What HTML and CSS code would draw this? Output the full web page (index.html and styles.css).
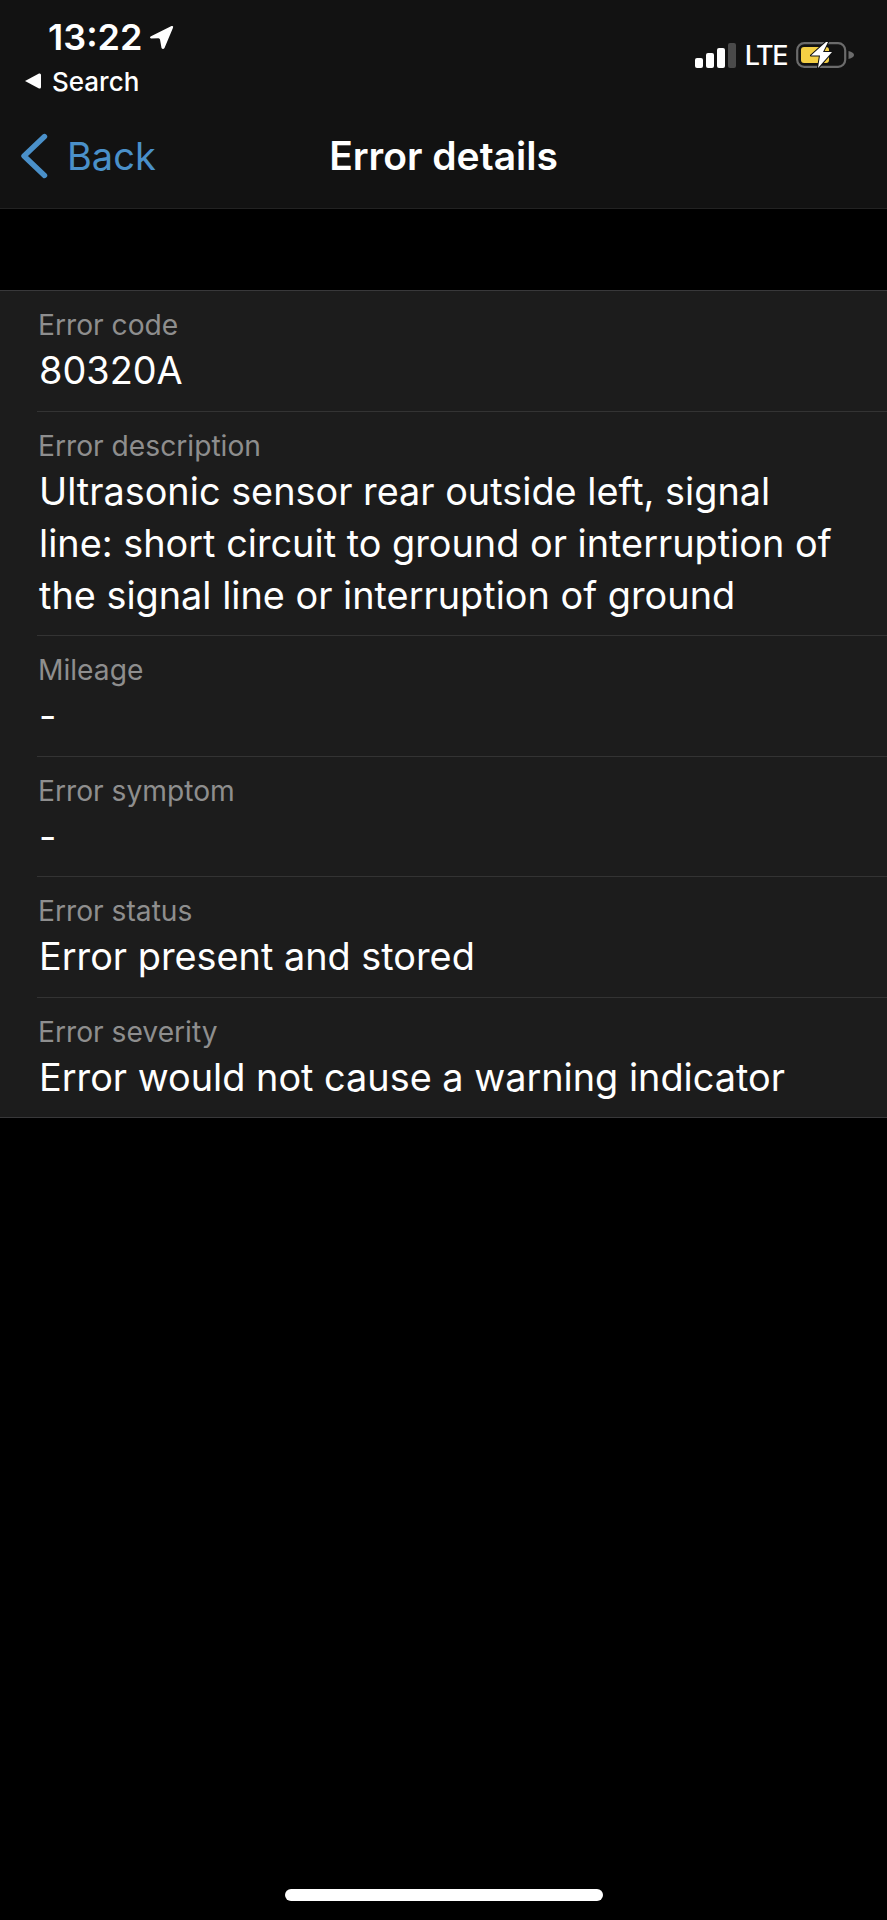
FILE: index.html
```html
<!DOCTYPE html>
<html lang="en">
<head>
  <meta charset="UTF-8">
  <meta name="viewport" content="width=device-width, initial-scale=1.0">
  <title>Error details</title>
  <link rel="stylesheet" href="styles.css">
</head>
<body>
  <div class="top">
    <div class="status">
      <div class="status-left">
        <div class="time-line">
          <span class="time">13:22</span>
          <svg class="arrow" width="25" height="25" viewBox="0 0 25 25"><path d="M1.5 11.5 L22.5 1 Q24.8 0.4 24 2.8 L15.5 23 Q14 25 12.5 23 L11 14.5 Q10.8 13.4 9.5 13.2 L2 13.5 Q0.2 12.8 1.5 11.5 Z" fill="#fff"/></svg>
        </div>
        <div class="search-line">
          <svg class="search-tri" width="18" height="18" viewBox="0 0 18 18"><path d="M1 9 L15 1.5 Q17 1 17 3 L17 15 Q17 17 15 16.5 Z" fill="#fff"/></svg>
          <span class="search">Search</span>
        </div>
      </div>
      <div class="status-right">
        <div class="signal">
          <span class="bar bar1"></span>
          <span class="bar bar2"></span>
          <span class="bar bar3"></span>
          <span class="bar bar4"></span>
        </div>
        <span class="lte">LTE</span>
        <svg class="battery" width="58" height="28" viewBox="0 0 58 28">
          <rect x="1.2" y="2.2" width="48" height="23.6" rx="7" fill="none" stroke="#6b6b6b" stroke-width="2.2"/>
          <rect x="5" y="6" width="28" height="16" rx="3" fill="#f4cf44"/>
          <path d="M52.5 10 Q58 11.5 58 14 Q58 16.5 52.5 18 Z" fill="#6b6b6b"/>
          <path d="M30 1 L15 14.5 L24 14.5 L22 27 L36 11 L27 11 L32 1 Z" fill="#fff" stroke="#121212" stroke-width="2" stroke-linejoin="round" paint-order="stroke"/>
        </svg>
      </div>
    </div>
    <div class="nav">
      <div class="back">
        <svg class="chevron" width="28" height="46" viewBox="0 0 28 46"><path d="M24.5 3.5 L4 23 L24.5 42.5" fill="none" stroke="#4a90c9" stroke-width="5.4" stroke-linecap="round" stroke-linejoin="round"/></svg>
        <span>Back</span>
      </div>
      <div class="nav-title">Error details</div>
    </div>
  </div>

  <div class="list">
    <div class="row">
      <div class="label">Error code</div>
      <div class="value">80320A</div>
    </div>
    <div class="row">
      <div class="label">Error description</div>
      <div class="value">Ultrasonic sensor rear outside left, signal line: short circuit to ground or interruption of the signal line or interruption of ground</div>
    </div>
    <div class="row">
      <div class="label">Mileage</div>
      <div class="value">-</div>
    </div>
    <div class="row">
      <div class="label">Error symptom</div>
      <div class="value">-</div>
    </div>
    <div class="row">
      <div class="label">Error status</div>
      <div class="value">Error present and stored</div>
    </div>
    <div class="row">
      <div class="label">Error severity</div>
      <div class="value">Error would not cause a warning indicator</div>
    </div>
  </div>

  <div class="home-wrap">
    <div class="home-bar"></div>
  </div>
</body>
</html>
```

FILE: styles.css
```css
* {
  box-sizing: border-box;
}

body {
  margin: 0;
  height: 1920px;
  background: #000;
  color: #fff;
  font-family: Inter, "Liberation Sans", sans-serif;
  display: flex;
  flex-direction: column;
  overflow: hidden;
}

.top {
  height: 209px;
  background: #121212;
  border-bottom: 1px solid #222;
}

.status {
  height: 106px;
  display: flex;
  justify-content: space-between;
}

.status-left {
  padding: 18px 0 0 24px;
}

.time-line {
  display: flex;
  align-items: center;
  padding-left: 24px;
  height: 38px;
}

.time {
  font-size: 36px;
  font-weight: 600;
}

.arrow {
  margin-left: 7px;
}

.search-line {
  display: flex;
  align-items: center;
  margin-top: 10px;
  height: 30px;
}

.search {
  font-size: 26px;
  font-weight: 500;
  margin-left: 10px;
}

.status-right {
  display: flex;
  align-items: center;
  height: 28px;
  margin-top: 41px;
  padding-right: 33px;
}

.signal {
  display: flex;
  align-items: flex-end;
  gap: 3px;
  height: 25px;
}

.bar {
  width: 8px;
  background: #fff;
  border-radius: 2px;
}

.bar1 { height: 10px; }
.bar2 { height: 15px; }
.bar3 { height: 20px; }
.bar4 { height: 25px; background: #4a4a4a; }

.lte {
  font-size: 27px;
  font-weight: 500;
  letter-spacing: -1.5px;
  margin-left: 9px;
}

.battery {
  margin-left: 9px;
}

.nav {
  height: 102px;
  position: relative;
  display: flex;
  align-items: center;
  justify-content: center;
  padding-bottom: 3px;
}

.back {
  position: absolute;
  left: 20px;
  top: 27px;
  display: flex;
  align-items: center;
  gap: 19px;
  height: 46px;
  color: #4a90c9;
  font-size: 38px;
}

.nav-title {
  font-size: 39px;
  font-weight: 600;
}

.list {
  margin-top: 81px;
  background: #1c1c1c;
  border-top: 1px solid #38383a;
  border-bottom: 1px solid #38383a;
}

.row {
  margin-left: 37px;
  padding: 15px 0 14.5px 1px;
  border-bottom: 1px solid #333;
}

.row:last-child {
  border-bottom: none;
}

.label {
  font-size: 28.2px;
  line-height: 38px;
  color: #8e8e8e;
}

.value {
  font-size: 37.85px;
  line-height: 52px;
  padding: 0 44px 0 1px;
}

.home-wrap {
  margin-top: auto;
  padding-bottom: 19px;
  display: flex;
  justify-content: center;
}

.home-bar {
  width: 318px;
  height: 12px;
  background: #fff;
  border-radius: 6px;
}
```
